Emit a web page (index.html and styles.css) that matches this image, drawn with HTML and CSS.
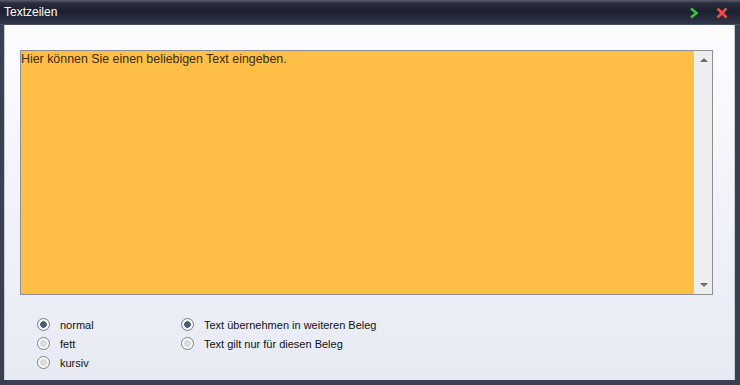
FILE: index.html
```html
<!DOCTYPE html>
<html lang="de">
<head>
  <meta charset="UTF-8">
  <title>Textzeilen</title>
  <link rel="stylesheet" href="styles.css">
</head>
<body>
  <div class="window">
    <div class="titlebar">
      <span class="title">Textzeilen</span>
      <div class="actions">
        <svg class="icon" width="12" height="12" viewBox="0 0 12 12">
          <path d="M3 1.5 L8.5 6 L3 10.5" fill="none" stroke="#3cc43a" stroke-width="2.6" stroke-linejoin="miter"/>
        </svg>
        <svg class="icon" width="12" height="12" viewBox="0 0 12 12">
          <path d="M1.5 1.5 L10.5 10.5 M10.5 1.5 L1.5 10.5" stroke="#f04a4a" stroke-width="2.6"/>
        </svg>
      </div>
    </div>
    <div class="content">
      <div class="editor">
        <div class="text">Hier können Sie einen beliebigen Text eingeben.</div>
        <div class="scrollbar">
          <span class="arrow up"></span>
          <span class="arrow down"></span>
        </div>
      </div>
      <div class="options">
        <div class="group">
          <label class="radio"><span class="dot checked"></span>normal</label>
          <label class="radio"><span class="dot"></span>fett</label>
          <label class="radio"><span class="dot"></span>kursiv</label>
        </div>
        <div class="group wide">
          <label class="radio"><span class="dot checked"></span>Text übernehmen in weiteren Beleg</label>
          <label class="radio"><span class="dot"></span>Text gilt nur für diesen Beleg</label>
        </div>
      </div>
    </div>
  </div>
</body>
</html>
```

FILE: styles.css
```css
body {
  margin: 0;
  font-family: 'Liberation Sans', Arial, sans-serif;
  font-size: 12px;
  color: #1a1a1a;
}

.window {
  width: 740px;
  height: 385px;
  display: flex;
  flex-direction: column;
  background: #3a4051;
  box-sizing: border-box;
  padding: 0 5px 5px 4px;
}

.titlebar {
  height: 25px;
  margin: 0 -5px 0 -4px;
  padding: 0 12px 0 4px;
  display: flex;
  align-items: center;
  justify-content: space-between;
  background: linear-gradient(#5b5f6c 0, #2a2e3e 3px, #1b1f2d 45%, #30364a 100%);
  border-bottom: 1px solid #4a5062;
  box-sizing: border-box;
}

.title {
  color: #ffffff;
  font-size: 12px;
  margin-top: -1px;
}

.actions {
  display: flex;
  gap: 16px;
  margin-top: 2px;
}

.content {
  flex: 1;
  display: flex;
  flex-direction: column;
  background: linear-gradient(#fdfdfe 0, #f3f5fa 40%, #e7eaf4 100%);
  border-left: 1px solid #c9ccd6;
  border-right: 1px solid #c9ccd6;
  padding: 25px 21px 0 15px;
}

.editor {
  height: 245px;
  display: flex;
  border: 1px solid #8d8f96;
  box-sizing: border-box;
  background: #ffbf47;
}

.text {
  flex: 1;
  padding: 1px 0 0 0;
  font-size: 12.4px;
  line-height: 15px;
  color: #3a2a10;
}

.scrollbar {
  width: 17px;
  background: #ededed;
  border-left: 1px solid #f6f6f6;
  display: flex;
  flex-direction: column;
  justify-content: space-between;
  align-items: center;
  padding: 7px 0 7px 0;
}

.arrow {
  width: 0;
  height: 0;
  border-left: 4px solid transparent;
  border-right: 4px solid transparent;
}

.arrow.up {
  border-bottom: 4px solid #6c6c6c;
}

.arrow.down {
  border-top: 4px solid #6c6c6c;
}

.options {
  display: flex;
  padding: 20px 0 0 17px;
}

.group {
  display: flex;
  flex-direction: column;
  width: 144px;
}

.group.wide {
  width: auto;
}

.radio {
  display: flex;
  align-items: center;
  height: 19px;
  gap: 10px;
  font-size: 11px;
  color: #111;
  white-space: nowrap;
}

.dot {
  width: 13px;
  height: 13px;
  flex: none;
  border-radius: 50%;
  box-sizing: border-box;
  border: 1px solid #7a7e86;
  background: radial-gradient(circle, #e2e2e2 0, #d6d6d6 35%, #fafafa 55%, #ffffff 100%);
}

.dot.checked {
  background: radial-gradient(circle, #4c5c72 0, #4c5c72 3px, #f0f0f0 3.6px, #ffffff 100%);
}
```
